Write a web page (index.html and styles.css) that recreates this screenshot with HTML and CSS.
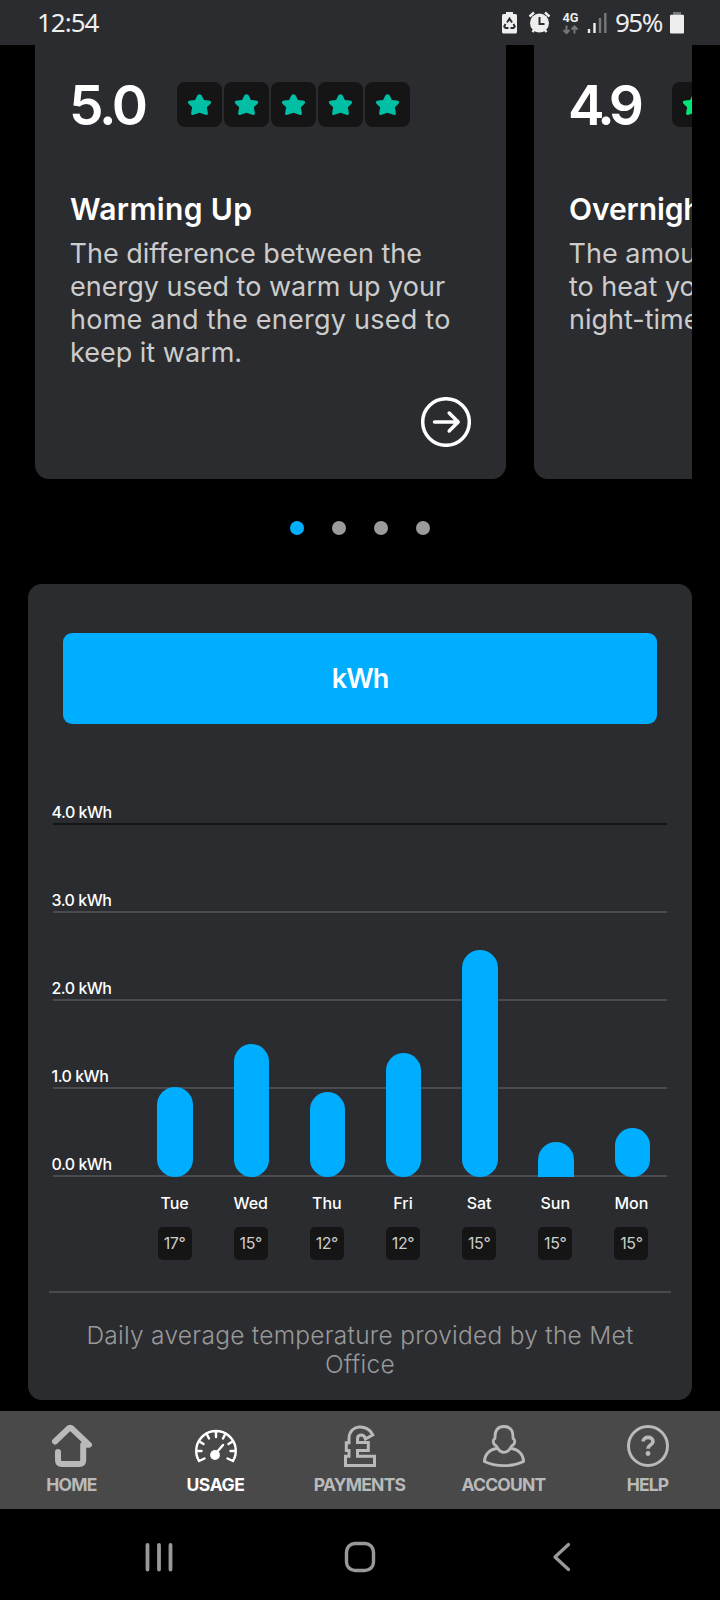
FILE: index.html
```html
<!DOCTYPE html>
<html lang="en">
<head>
<meta charset="utf-8">
<title>Usage</title>
<link rel="stylesheet" href="styles.css">
</head>
<body>
<svg width="0" height="0" class="defs">
  <symbol id="star" viewBox="0 0 25 24"><path d="M12.500 1.300c1.500 0 2.100.9 2.700 2.300L16.900 7l4.900.6c2.600.3 3 1.900 1.500 3.300L19.800 14.200l1 5.300c.3 2.300-.5 2.900-2.400 2.200L12.500 19.700l-5.900 2c-1.900.7-2.700.1-2.400-2.200l1-5.300-3.500-3.300C.2 9.500.6 7.900 3.200 7.600L8.100 7l1.700-3.400c.6-1.400 1.200-2.300 2.700-2.300z" fill="currentColor"/></symbol>
</svg>
<header class="status">
  <span class="clock">12:54</span>
  <svg class="status-icons" width="88" height="45" viewBox="500 0 88 45">
    <path d="M506 12h7v2h2.500q1.500 0 1.500 1.500v16.500q0 1.500-1.500 1.500h-12q-1.500 0-1.500-1.500V15.500q0-1.500 1.500-1.500H506z" fill="#eee"/>
    <path d="M507 22.500l2.500-4 2.500 4M513.500 24l1.300 2.500-1.300 1.500h-3M505.500 24l-1.300 2.500 1.300 1.500h3" fill="none" stroke="#2b2c30" stroke-width="1.900"/>
    <circle cx="539.500" cy="23" r="9.500" fill="#eee"/>
    <path d="M539.500 17v7h5" fill="none" stroke="#2b2c30" stroke-width="2"/>
    <path d="M529.500 16.500l4.500-4M549.500 16.500l-4.500-4M532.500 32l2.500-3M546.500 32l-2.500-3" fill="none" stroke="#eee" stroke-width="2.400"/>
    <path d="M566.500 25.500v7M563.500 30l3 3 3-3M574.500 33.500v-7M571.500 29.500l3-3 3 3" fill="none" stroke="#777" stroke-width="2"/>
    <text x="562.500" y="21.500" class="net" textLength="16" lengthAdjust="spacingAndGlyphs">4G</text>
  </svg>
  <svg class="signal" width="20" height="45" viewBox="587 0 20 45">
    <path d="M589 29v4M594.500 23v10" stroke="#eee" stroke-width="2.400"/>
    <path d="M600 18v15M605.300 13v20" stroke="#77787a" stroke-width="2.400"/>
  </svg>
  <span class="percent">95%</span>
  <svg class="battery" width="16" height="45" viewBox="669 0 16 45">
    <path d="M673 15v-3h8v3" fill="#77787a"/><rect x="670" y="14.700" width="14" height="18.800" rx="1" fill="#eee"/>
  </svg>
</header>

<main class="content">
  <section class="carousel">
    <article class="card">
      <div class="rating"><span class="score">5.0</span>
        <div class="stars">
          <span class="tile"><svg><use href="#star"/></svg></span><span class="tile"><svg><use href="#star"/></svg></span><span class="tile"><svg><use href="#star"/></svg></span><span class="tile"><svg><use href="#star"/></svg></span><span class="tile"><svg><use href="#star"/></svg></span>
        </div>
      </div>
      <h2 class="card-title">Warming Up</h2>
      <p class="card-text">The difference between the<br>energy used to warm up your<br><span class="wide">home and the energy used to</span><br>keep it warm.</p>
      <svg class="go" width="50" height="50" viewBox="0 0 50 50" fill="none" stroke="#fff" stroke-width="3.500" stroke-linecap="round" stroke-linejoin="round"><circle cx="25" cy="25" r="23.300"/><path d="M13.500 25H37M28.200 16l9 9-9 9"/></svg>
    </article>
    <article class="card second">
      <div class="rating"><span class="score">4.9</span>
        <div class="stars green">
          <span class="tile"><svg><use href="#star"/></svg></span>
        </div>
      </div>
      <h2 class="card-title">Overnight</h2>
      <p class="card-text">The amount<br>to heat your<br>night-time</p>
    </article>
  </section>
  <div class="dots"><i class="on"></i><i></i><i></i><i></i></div>

  <section class="usage">
    <button class="unit">kWh</button>
    <div class="plot">
      <div class="row dark"><span>4.0 kWh</span></div>
      <div class="row"><span>3.0 kWh</span></div>
      <div class="row"><span>2.0 kWh</span></div>
      <div class="row"><span>1.0 kWh</span></div>
      <div class="row"><span>0.0 kWh</span></div>
      <div class="bars">
        <div class="bar" style="height:90px"></div>
        <div class="bar" style="height:133px"></div>
        <div class="bar" style="height:85px"></div>
        <div class="bar" style="height:124px"></div>
        <div class="bar" style="height:227px"></div>
        <div class="bar flat" style="height:35px"></div>
        <div class="bar" style="height:49px"></div>
      </div>
    </div>
    <div class="days">
      <div>Tue<b>17°</b></div><div>Wed<b>15°</b></div><div>Thu<b>12°</b></div><div>Fri<b>12°</b></div><div>Sat<b>15°</b></div><div>Sun<b>15°</b></div><div>Mon<b>15°</b></div>
    </div>
    <p class="note">Daily average temperature provided by the Met<br>Office</p>
  </section>
</main>

<nav class="tabs">
  <a class="tab"><svg width="44" height="44" viewBox="50 1424 44 44" fill="none" stroke="#bababa" stroke-width="6" stroke-linecap="round" stroke-linejoin="round"><path d="M55 1441.500l13.200-12.700q2-1.800 4 0L89 1444.800h-5.800v15.200q0 4-4 4H62q-4 0-4-4v-8"/></svg><span>HOME</span></a>
  <a class="tab active"><svg width="44" height="44" viewBox="194 1424 44 44" fill="none" stroke="#fff" stroke-width="2.400" stroke-linecap="round"><path d="M204.500 1458.500l-5.500 2.500a19.800 19.800 0 1 1 34 0l-5.500-2.500M196.500 1451h5M230.500 1451h5M216 1432v5M207 1434.500l2 4M225 1434.500l-2 4M199.500 1441.500l4 2.500M232.500 1441.500l-4 2.500"/><path d="M217 1452l6-7"/><circle cx="215" cy="1455" r="4.900" fill="#fff" stroke="none"/></svg><span>USAGE</span></a>
  <a class="tab"><svg width="44" height="44" viewBox="338 1424 44 44" fill="none" stroke="#bababa" stroke-width="3"><path d="M365.500 1439l7.300-4.200c-5-11-23.800-11-23.800 4v4h-2.700v7.700h2.700v5.700h-3.500v9.300h29v-9.300h-17v-5.700h10.800v-8h-10.800v-3.500c0-5 6.500-5.500 8 0z"/></svg><span>PAYMENTS</span></a>
  <a class="tab"><svg width="44" height="44" viewBox="482 1424 44 44" fill="none" stroke="#bababa" stroke-width="2.800" stroke-linejoin="round"><path d="M504 1426.500c-6.500 0-9 4.500-9 10.500v1.500c-3 1.500-1.500 6.500 1 7l2.200 3.500c2.800 4.500 8.800 4.500 11.600 0l2.200-3.500c2.500-.5 4-5.500 1-7v-1.500c0-6-2.500-10.500-9-10.500z"/><path d="M497 1448.500c-8 1-12.600 6.500-12.600 13 11 5.500 28.200 5.500 39.200 0 0-6.500-4.600-12-12.600-13"/></svg><span>ACCOUNT</span></a>
  <a class="tab"><svg width="44" height="44" viewBox="626 1424 44 44" fill="none" stroke="#bababa" stroke-width="3"><circle cx="648" cy="1446" r="19.500"/><path d="M643.200 1441.500c0-5.500 9.800-5.500 9.800 0 0 3.600-5 3.200-5 7.300" stroke-width="3.600"/><circle cx="648" cy="1453.500" r="2.400" fill="#bababa" stroke="none"/></svg><span>HELP</span></a>
</nav>
<footer class="system">
  <svg width="720" height="91" viewBox="0 1509 720 91" fill="none" stroke="#999" stroke-width="3.800" stroke-linecap="round" stroke-linejoin="round"><path d="M147.500 1545v24.500M159 1545v24.500M170.500 1545v24.500"/><rect x="346.500" y="1543.500" width="27" height="27" rx="8.500" stroke-width="3.400"/><path d="M568.500 1544.500L555 1557l13.500 12.500" stroke-width="3.300"/></svg>
</footer>
</body>
</html>
```
FILE: styles.css
```css
* { box-sizing: border-box; }
body { margin: 0; width: 720px; height: 1600px; overflow: hidden; background: #000; color: #fff; font-family: Inter, "Liberation Sans", sans-serif; display: flex; flex-direction: column; }
svg { display: block; flex: none; }
.defs { position: absolute; }
.status { height: 45px; background: #2b2c30; display: flex; align-items: center; padding-left: 37px; font-family: "Noto Sans", sans-serif; color: #eee; font-size: 26px; white-space: nowrap; }
.clock { width: 463px; letter-spacing: -1px; line-height: 45px; }
.net { font: bold 13px Roboto, sans-serif; fill: #eee; }
.signal { margin-left: -1px; }
.percent { margin-left: 8px; width: 54px; letter-spacing: -1.5px; line-height: 45px; }
.content { height: 1366px; }
.carousel { width: 692px; height: 434px; padding-left: 35px; overflow: hidden; display: flex; gap: 28px; }
.card { flex: none; width: 471px; padding: 37px 35px 0; background: #2b2c30; border-radius: 0 0 14px 14px; }
.rating { height: 45px; display: flex; align-items: center; }
.score { flex: none; width: 107px; font-size: 55px; font-weight: 600; line-height: 46px; letter-spacing: -3.2px; text-indent: -1px; }
.second .score { width: 103px; letter-spacing: -5.500px; }
.stars { display: flex; gap: 2px; color: #00bfa5; }
.stars.green { color: #00e676; }
.tile { width: 45px; height: 45px; border-radius: 8px; background: #151515; display: grid; place-items: center; }
.tile svg { width: 25px; height: 24px; }
.card-title { margin: 62px 0 0; font-size: 30px; font-weight: 600; line-height: 40px; letter-spacing: 0.35px; white-space: nowrap; }
.second .card-title { letter-spacing: -0.1px; }
.card-text { margin: 8px 0 0; font-size: 27px; line-height: 33px; color: #ccc; white-space: nowrap; text-indent: -0.5px; }
.wide { letter-spacing: 0.25px; }
.go { margin: 28px 0 0 auto; }
.dots { margin-top: 42px; display: flex; justify-content: center; gap: 28px; }
.dots i { width: 14px; height: 14px; border-radius: 50%; background: #9b9b9b; }
.dots .on { background: #00aeff; }
.usage { margin: 49px 28px 0; height: 816px; border-radius: 14px; background: #2b2c30; padding: 49px 21px 0; }
.unit { display: block; width: 594px; height: 91px; margin: 0 14px; padding: 0; border: 0; border-radius: 9px; background: #00aeff; color: #fff; font: 600 27px Inter, sans-serif; letter-spacing: -1px; }
.plot { position: relative; margin: 13px 4px 0; }
.row { height: 88px; border-bottom: 2px solid #4a4b4e; display: flex; align-items: flex-end; font-size: 16px; font-weight: 500; line-height: 20px; padding-bottom: 1px; letter-spacing: -0.5px; }
.row span { margin-left: -1.5px; }
.row.dark { border-color: #151515; }
.bars { position: absolute; left: 104.400px; bottom: 0; display: flex; align-items: flex-end; gap: 40.700px; }
.bar { width: 35.500px; border-radius: 18px; background: #00aeff; }
.bar.flat { border-radius: 18px 18px 0 0; }
.days { width: 533px; margin: 16px 0 0 87.500px; display: grid; grid-template-columns: repeat(7, 1fr); text-align: center; font-size: 16px; font-weight: 500; line-height: 20px; }
.days b { display: block; width: 34px; height: 33px; margin: 14px auto 0; border-radius: 5px; background: #151515; color: #ccc; font-weight: 400; line-height: 33px; letter-spacing: -0.4px; }
.note { margin: 31px 0 0; border-top: 2px solid #4a4a4a; padding-top: 28px; text-align: center; font-size: 24.500px; font-weight: 300; line-height: 29px; letter-spacing: 0.27px; color: #999; white-space: nowrap; }
.tabs { height: 98px; background: #494949; display: grid; grid-template-columns: repeat(5, 144px); color: #bababa; }
.tab { padding-top: 13px; display: flex; flex-direction: column; align-items: center; font-size: 17.500px; font-weight: 700; line-height: 20px; letter-spacing: -0.8px; }
.tab span { margin: 7px 1px 0 0; }
.tab.active { letter-spacing: -0.4px; color: #fff; }
.system { height: 91px; }
```
